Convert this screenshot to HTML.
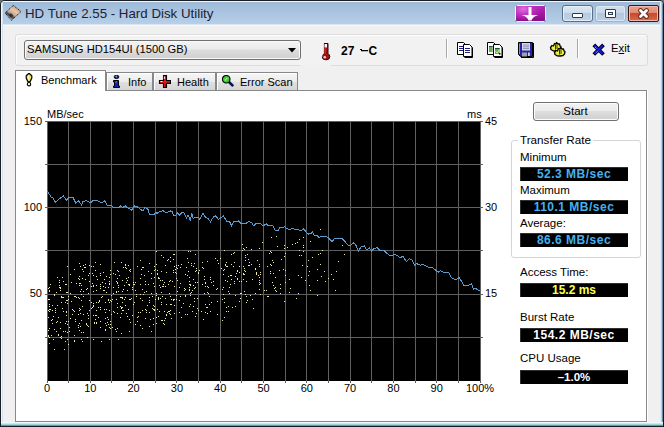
<!DOCTYPE html>
<html><head><meta charset="utf-8"><style>
*{margin:0;padding:0;box-sizing:border-box}
html,body{width:664px;height:427px;overflow:hidden;background:#6d7378}
body{position:relative;font-family:"Liberation Sans",sans-serif;font-size:11px;color:#000}
.a{position:absolute}
.t{position:absolute;white-space:nowrap;line-height:1}
#win{position:absolute;left:0;top:0;width:664px;height:427px;background:linear-gradient(90deg,#1a1d22 663px,#0c1a28 663px);border-radius:5px 5px 0 0;overflow:hidden}
#frame{position:absolute;left:1px;top:1px;width:662px;height:425px;border-radius:4px 4px 0 0;background:#f0f0f0;overflow:hidden}
#title{position:absolute;left:0;top:0;width:662px;height:25px;background:linear-gradient(#f4f8fc 0,#f4f8fc 1px,#9dbad8 1px,#a6c1dd 8px,#b7cfe8 23px,#d8e4f0 23px,#d8e4f0 24px,#f4f7fb 24px)}
.lf{position:absolute;left:0;top:1px;width:2px;height:425px;border-top-left-radius:3px;background:linear-gradient(90deg,#f6f9fc 0,#f6f9fc 1px,#d3e1ee 1px)}
.rf{position:absolute;right:0;top:1px;width:3px;height:425px;border-top-right-radius:3px;background:linear-gradient(90deg,#e2ecf6 0,#e2ecf6 1px,#b8d2e4 1px,#b8d2e4 2px,#6a8ca2 2px)}
.bf{position:absolute;left:0;top:421px;width:662px;height:5px;background:linear-gradient(#eefafc 0,#eefafc 1px,#c6ecf2 1px,#c6ecf2 2px,#9cd4e0 2px,#9cd4e0 3px,#5e9cac 3px,#5e9cac 4px,#05080a 4px)}
.ttl{left:25px;top:7px;font-size:13.3px;color:#1b2233}
.wb{position:absolute;top:5px;height:17px;border-radius:3px}
#band{position:absolute;left:15px;top:34px;width:633px;height:32px;border:1px solid #dcdcdc;border-radius:3px;background:#f2f2f2;box-shadow:inset 1px 1px 0 #fff}
#combo{position:absolute;left:24px;top:40px;width:277px;height:20px;border:1px solid #707070;border-radius:3px;background:linear-gradient(#f3f3f3 0,#ebebeb 45%,#dddddd 50%,#cfcfcf 100%);box-shadow:inset 0 0 0 1px #fafafa}
.tab{position:absolute;top:72px;height:18px;border:1px solid #878889;border-bottom:none;background:linear-gradient(#f6f6f6 0,#ececec 50%,#dfdfdf 51%,#d6d6d6 100%);box-shadow:inset 1px 1px 0 #fff}
#panel{position:absolute;left:15px;top:90px;width:632px;height:332px;border:1px solid #878889;background:#fff;box-shadow:1px 0 0 #fff}
.xl{position:absolute;top:383px;width:40px;text-align:center;font-size:11px;line-height:1}
.vbox{position:absolute;left:520px;width:108px;box-shadow:inset 1px 1px 0 #303030;height:14px;background:#000;text-align:center;font-weight:bold;font-size:12px;line-height:14px}
.lbl{position:absolute;left:520px;font-size:11.5px;line-height:1;white-space:nowrap}
</style></head><body>
<div id="win"><div id="frame">
 <div id="title"></div>
 <div class="lf"></div>
 <div class="rf"></div>
 <div class="bf"></div>
</div></div>
<!-- title icon -->
<svg class="a" style="left:0;top:0" width="26" height="26" viewBox="0 0 26 26">
 <defs><linearGradient id="ig" x1="0.8" y1="0.1" x2="0.2" y2="0.9"><stop offset="0" stop-color="#b89a80"/><stop offset="0.35" stop-color="#e8c8a8"/><stop offset="0.6" stop-color="#c0a890"/><stop offset="0.75" stop-color="#404040"/><stop offset="1" stop-color="#d8e0e8"/></linearGradient></defs>
 <path d="M13.3 5.4 L21 11.5 L11.5 20.3 L5 13Z" fill="url(#ig)" stroke="#1a2030" stroke-width="1" stroke-dasharray="1.2 0.8"/>
 <path d="M8.5 15 L11 13 L13.5 15.5 L11 17.5Z" fill="#202020" opacity="0.7"/>
</svg>
<div class="t ttl">HD Tune 2.55 - Hard Disk Utility</div>
<!-- purple button -->
<div class="a" style="left:515px;top:5px;width:31px;height:17px;border:1px solid #fbeefb;border-radius:2px;background:radial-gradient(ellipse 60% 80% at 25% 20%,#e070e0 0,#c030c0 50%,transparent 100%),linear-gradient(#b828b8,#8a0a8a)"></div>
<svg class="a" style="left:515px;top:5px" width="31" height="17" viewBox="0 0 31 17">
 <path d="M0.5 0.5h1.5v1h-1zM29 0.5h1.5v1.5h-1zM0.5 15h1.5v1.5h-1.5zM29 15h1.5v1.5h-1.5z" fill="#6a5a8a"/>
 <path d="M13.5 2 H16.5 V10 H23.5 Q18 11 16.5 15.5 H13.5 Q12 11 6.5 10 H13.5Z" fill="#fff"/>
</svg>
<!-- min -->
<div class="wb" style="left:562px;width:31px;border:1px solid #5b6e87;background:linear-gradient(#dce8f4 0,#cddcec 45%,#b6cbe2 50%,#bfd3e9 100%);box-shadow:inset 0 0 0 1px #e6eef8"></div>
<div class="a" style="left:572px;top:13px;width:11px;height:5px;border:1px solid #2e3a4c;border-radius:1px;background:#fff"></div>
<!-- max -->
<div class="wb" style="left:595px;width:31px;border:1px solid #9cb4cc;background:linear-gradient(#d2e0ee 0,#c6d7ea 45%,#b2c8e0 50%,#bcd0e6 100%);box-shadow:inset 0 0 0 1px #dde8f3"></div>
<div class="a" style="left:605px;top:9px;width:11px;height:9px;border:1px solid #2e3a4c;border-radius:1px;background:#fff"></div>
<div class="a" style="left:608px;top:12px;width:5px;height:3px;border:1px solid #2e3a4c;background:#e8e8e8"></div>
<!-- close -->
<div class="wb" style="left:628px;width:31px;border-radius:2px;border:1px solid #3b1616;background:linear-gradient(#eba08e 0,#e28a74 45%,#c8492c 50%,#d86a4c 100%);box-shadow:inset 0 0 0 1px #f2b8a8"></div>
<svg class="a" style="left:637px;top:8px" width="13" height="11" viewBox="0 0 13 11"><path d="M3.5 2.5 L9.5 8.5 M9.5 2.5 L3.5 8.5" stroke="#5a2a20" stroke-width="4.6" stroke-linecap="round"/><path d="M3.5 2.5 L9.5 8.5 M9.5 2.5 L3.5 8.5" stroke="#fff" stroke-width="2.8" stroke-linecap="round"/></svg>

<div id="band"></div>
<div id="combo"></div>
<div class="a" style="left:300px;top:65px;width:31px;height:1px;background:#f0f0f0"></div>
<div class="t" style="left:27px;top:44px;font-size:11.2px">SAMSUNG HD154UI (1500 GB)</div>
<svg class="a" style="left:288px;top:48px" width="8" height="5"><path d="M0 0H8L4 4.5Z" fill="#000"/></svg>
<!-- thermometer -->
<svg class="a" style="left:320px;top:42px" width="12" height="19" viewBox="0 0 12 19">
 <path d="M4 1.5 H8 V11.5 Q9.8 12.8 9.8 14.8 Q9.8 17.8 6 17.8 Q2.2 17.8 2.2 14.8 Q2.2 12.8 4 11.5Z" fill="#a81010" stroke="#2a0505" stroke-width="1"/>
 <path d="M3.5 1.2V11.3Q1.8 12.6 1.7 15" stroke="#fff" stroke-width="0.8" fill="none" opacity="0.9"/>
 <rect x="4.5" y="2" width="2.5" height="3.5" fill="#f8f0f0"/>
 <path d="M5 6V11.5" stroke="#e04848" stroke-width="0.9"/>
 <circle cx="4.8" cy="15.2" r="1.3" fill="#f8c8c8"/>
</svg>
<div class="t" style="left:341px;top:45px;font-size:12px;font-weight:bold">27</div>
<svg class="a" style="left:359px;top:47px" width="10" height="6"><path d="M1 2h2v1h-2zM2 3h7v1.3h-7z" fill="#000"/></svg>
<div class="t" style="left:368.5px;top:45px;font-size:12px;font-weight:bold">C</div>
<div class="a" style="left:446px;top:39px;width:1px;height:19px;background:#a8a8a8;box-shadow:1px 0 0 #fff"></div>
<div class="a" style="left:577px;top:39px;width:1px;height:19px;background:#a8a8a8;box-shadow:1px 0 0 #fff"></div>
<!-- copy icon -->
<svg class="a" style="left:456px;top:41px" width="18" height="17" viewBox="0 0 18 17">
 <path d="M1.5 1.5H7.5L9 3V13.5H1.5Z" fill="#fff" stroke="#000"/>
 <path d="M3 5.5H7M3 7.5H7M3 9.5H7" stroke="#20207a"/>
 <path d="M7.5 3.5H13.5L16 6V15.5H7.5Z" fill="#fff" stroke="#000"/>
 <path d="M8.5 16.5H16.5V6.5" stroke="#000" fill="none"/>
 <path d="M9 7.5H14M9 9.5H14M9 11.5H14" stroke="#20207a"/>
</svg>
<svg class="a" style="left:486px;top:41px" width="18" height="17" viewBox="0 0 18 17">
 <path d="M1.5 1.5H7.5L9 3V13.5H1.5Z" fill="#fff" stroke="#000"/>
 <rect x="3" y="5" width="3.6" height="6" fill="#6ab048"/><path d="M3 5.5H6.6" stroke="#205040"/>
 <path d="M7.5 3.5H13.5L16 6V15.5H7.5Z" fill="#fff" stroke="#000"/>
 <path d="M8.5 16.5H16.5V6.5" stroke="#000" fill="none"/>
 <rect x="9" y="7" width="4.7" height="6" fill="#6ab048"/><path d="M9 7.5H13.7" stroke="#205040"/>
 <path d="M9.5 10.5L11 12L13 9" stroke="#c8f0a0" fill="none"/><rect x="13" y="12" width="1.5" height="1.5" fill="#000"/>
</svg>
<!-- floppy -->
<svg class="a" style="left:517px;top:41px" width="18" height="18" viewBox="0 0 18 18">
 <path d="M1.5 1.5H15.5V15.5H3.5L1.5 13.5Z" fill="#2424a8" stroke="#000"/>
 <path d="M2.5 2.5V13" stroke="#8090e0" stroke-width="1"/>
 <rect x="5" y="2" width="8" height="7.5" fill="#d8d8f0"/>
 <path d="M6 4H12M6 5.8H12M6 7.6H12" stroke="#8888a8" stroke-width="0.9"/>
 <rect x="5" y="11.5" width="5" height="4" fill="#a0a0b0"/>
 <rect x="11" y="11.5" width="1.8" height="3.5" fill="#d0d0e0"/>
 <path d="M16.5 2V16.5H4" stroke="#000" fill="none"/>
</svg>
<!-- coins -->
<svg class="a" style="left:548px;top:41px" width="20" height="18" viewBox="0 0 20 18">
 <path d="M2.5 6.5 L4 4.5 L5.5 5 L6.5 2.5 L8 3 L8.5 1.5 L10 3 L11.5 2.8 L12 5 L13 5.5 L12.5 8 L11 9.5 L8 10 L5 9.8 L3 8.5Z" fill="#f0f040" stroke="#000" stroke-width="1.3" stroke-linejoin="round"/>
 <path d="M7.5 3.5V8.5M9 3.5V8" stroke="#202000" stroke-width="0.9"/>
 <path d="M6.5 11.5 L8 9.5 L9.5 10 L10.5 7.5 L12 8 L12.5 6.5 L14 8 L15.5 7.8 L16 10 L17 10.5 L16.5 13 L15 14.5 L12 15 L9 14.8 L7 13.5Z" fill="#f0f040" stroke="#000" stroke-width="1.3" stroke-linejoin="round"/>
 <path d="M11.5 8.5V13.5M13 8.5V13" stroke="#202000" stroke-width="0.9"/>
</svg>
<!-- X exit -->
<svg class="a" style="left:592px;top:43px" width="14" height="14" viewBox="0 0 14 14">
 <path d="M1.8 1.8L11.5 11.5M11.5 1.8L1.8 11.5" stroke="#000028" stroke-width="3.8" stroke-linecap="butt"/>
 <path d="M2.6 2.6L10.7 10.7M10.7 2.6L2.6 10.7" stroke="#1818d0" stroke-width="2" stroke-linecap="butt"/>
 <path d="M2.8 3.8L4.5 5.5M4 9.8L5.5 8.3" stroke="#90b0f8" stroke-width="0.9"/>
</svg>
<div class="t" style="left:611px;top:43px;font-size:11.3px">E<u>x</u>it</div>

<!-- tabs -->
<div id="panel"></div>
<div class="tab" style="left:106px;width:47px"></div>
<div class="tab" style="left:153px;width:63px"></div>
<div class="tab" style="left:216px;width:82px"></div>
<div class="a" style="left:15px;top:70px;width:91px;height:21px;border:1px solid #878889;border-bottom:none;background:#fff"></div>
<!-- bulb -->
<svg class="a" style="left:25px;top:73px" width="8" height="14" viewBox="0 0 8 14">
 <path d="M3.5 0.7 H4.5 L6.8 2.8 V5 L5 8.8 H3 L1.2 5 V2.8Z" fill="#f0e850" stroke="#000" stroke-width="1.2"/>
 <path d="M3.5 2.5 L3.8 7" stroke="#fffbd0" stroke-width="1"/>
 <circle cx="4" cy="11.2" r="1.7" fill="#fff" stroke="#000" stroke-width="1.1"/>
</svg>
<div class="t" style="left:41px;top:75px;font-size:11px">Benchmark</div>
<!-- info -->
<svg class="a" style="left:112px;top:75px" width="9" height="13" viewBox="0 0 9 13">
 <ellipse cx="4.5" cy="1.9" rx="2.4" ry="1.7" fill="#1a2a80" stroke="#000" stroke-width="0.9"/>
 <circle cx="4.2" cy="1.6" r="0.8" fill="#80a8f0"/>
 <path d="M1.5 5.5 H6.5 V11 H7.5 V12.5 H1.5 V11 H2.5 V7 H1.5Z" fill="#1020b0" stroke="#000" stroke-width="1"/>
 <path d="M3.5 7.5 Q3.8 6.6 4.8 6.8" stroke="#a0b8f0" stroke-width="0.9" fill="none"/>
</svg>
<div class="t" style="left:128px;top:77px;font-size:11px">Info</div>
<!-- health cross -->
<svg class="a" style="left:158px;top:74px" width="13" height="14" viewBox="0 0 13 14">
 <path d="M5.5 1.5H8.5V6.5H12.5V9.5H8.5V13.5H5.5V9.5H1.5V6.5H5.5Z" fill="#d81818" stroke="#000" stroke-width="1.1"/>
 <path d="M6.3 2.5V5M2.5 7.5H4.5" stroke="#fff" stroke-width="1"/>
 <path d="M7.5 10V13M9 8.5H12" stroke="#801010" stroke-width="1"/>
</svg>
<div class="t" style="left:177px;top:77px;font-size:11px">Health</div>
<!-- magnifier -->
<svg class="a" style="left:222px;top:75px" width="13" height="13" viewBox="0 0 13 13">
 <path d="M6.5 6.5L11.2 11.2" stroke="#0a1250" stroke-width="2.6" stroke-linecap="butt"/>
 <circle cx="4.2" cy="4.2" r="3.8" fill="#40c838" stroke="#000" stroke-width="1.1"/>
 <path d="M2.8 5.5 L5.5 2.8" stroke="#a0f090" stroke-width="1.2"/>
</svg>
<div class="t" style="left:240px;top:77px;font-size:11px">Error Scan</div>

<!-- chart -->
<svg class="a" style="left:0;top:0" width="664" height="427">
 <rect x="48" y="122" width="432" height="259" fill="#000"/>
 <path d="M68.5 121V381M90.5 121V381M111.5 121V381M133.5 121V381M155.5 121V381M176.5 121V381M198.5 121V381M220.5 121V381M241.5 121V381M263.5 121V381M285.5 121V381M306.5 121V381M328.5 121V381M350.5 121V381M371.5 121V381M393.5 121V381M415.5 121V381M436.5 121V381M458.5 121V381M47 164.5H480M47 207.5H480M47 250.5H480M47 294.5H480M47 337.5H480" stroke="#606060" stroke-width="1"/>
 <path d="M45 121.5H483M47.5 121V383M480.5 121V381M47.5 381V383M68.5 381V383M90.5 381V383M111.5 381V383M133.5 381V383M155.5 381V383M176.5 381V383M198.5 381V383M220.5 381V383M241.5 381V383M263.5 381V383M285.5 381V383M306.5 381V383M328.5 381V383M350.5 381V383M371.5 381V383M393.5 381V383M415.5 381V383M436.5 381V383M458.5 381V383M480.5 381V383M45 121.5H47M45 164.5H47M45 207.5H47M45 250.5H47M45 294.5H47M45 337.5H47M480 121.5H483M480 164.5H483M480 207.5H483M480 250.5H483M480 294.5H483M480 337.5H483" stroke="#606060" stroke-width="1" fill="none"/>
 <path d="M149 300h1v1h-1zM215 258h1v1h-1zM59 287h1v1h-1zM180 267h1v1h-1zM228 306h1v1h-1zM93 285h1v1h-1zM104 309h1v1h-1zM218 263h1v1h-1zM146 291h1v1h-1zM124 299h1v1h-1zM275 290h1v1h-1zM178 265h1v1h-1zM60 328h1v1h-1zM228 311h1v1h-1zM195 254h1v1h-1zM168 259h1v1h-1zM100 264h1v1h-1zM88 293h1v1h-1zM73 310h1v1h-1zM134 284h1v1h-1zM102 282h1v1h-1zM231 254h1v1h-1zM163 323h1v1h-1zM208 293h1v1h-1zM170 261h1v1h-1zM67 292h1v1h-1zM154 266h1v1h-1zM79 263h1v1h-1zM239 266h1v1h-1zM161 320h1v1h-1zM193 266h1v1h-1zM154 309h1v1h-1zM55 312h1v1h-1zM217 288h1v1h-1zM129 270h1v1h-1zM150 319h1v1h-1zM118 291h1v1h-1zM56 292h1v1h-1zM116 281h1v1h-1zM74 340h1v1h-1zM103 286h1v1h-1zM173 299h1v1h-1zM87 337h1v1h-1zM93 339h1v1h-1zM157 274h1v1h-1zM183 303h1v1h-1zM126 278h1v1h-1zM128 265h1v1h-1zM158 298h1v1h-1zM179 287h1v1h-1zM211 282h1v1h-1zM49 290h1v1h-1zM149 297h1v1h-1zM81 289h1v1h-1zM239 281h1v1h-1zM189 284h1v1h-1zM310 241h1v1h-1zM70 274h1v1h-1zM96 310h1v1h-1zM116 291h1v1h-1zM98 302h1v1h-1zM109 310h1v1h-1zM220 258h1v1h-1zM242 244h1v1h-1zM80 266h1v1h-1zM132 289h1v1h-1zM303 237h1v1h-1zM226 266h1v1h-1zM70 318h1v1h-1zM74 269h1v1h-1zM189 290h1v1h-1zM131 298h1v1h-1zM82 278h1v1h-1zM145 309h1v1h-1zM204 279h1v1h-1zM126 313h1v1h-1zM107 322h1v1h-1zM170 304h1v1h-1zM154 306h1v1h-1zM174 266h1v1h-1zM70 293h1v1h-1zM74 335h1v1h-1zM135 282h1v1h-1zM97 279h1v1h-1zM124 285h1v1h-1zM48 310h1v1h-1zM110 270h1v1h-1zM76 283h1v1h-1zM142 300h1v1h-1zM169 313h1v1h-1zM61 338h1v1h-1zM91 302h1v1h-1zM119 275h1v1h-1zM80 309h1v1h-1zM243 279h1v1h-1zM204 293h1v1h-1zM277 246h1v1h-1zM275 287h1v1h-1zM202 284h1v1h-1zM248 259h1v1h-1zM279 270h1v1h-1zM66 321h1v1h-1zM258 275h1v1h-1zM193 306h1v1h-1zM53 339h1v1h-1zM188 262h1v1h-1zM113 273h1v1h-1zM120 297h1v1h-1zM49 309h1v1h-1zM91 286h1v1h-1zM48 330h1v1h-1zM164 324h1v1h-1zM160 280h1v1h-1zM79 285h1v1h-1zM125 297h1v1h-1zM164 320h1v1h-1zM272 282h1v1h-1zM137 317h1v1h-1zM195 271h1v1h-1zM252 279h1v1h-1zM100 275h1v1h-1zM203 319h1v1h-1zM188 271h1v1h-1zM154 277h1v1h-1zM177 280h1v1h-1zM67 332h1v1h-1zM205 304h1v1h-1zM132 289h1v1h-1zM320 229h1v1h-1zM231 275h1v1h-1zM82 306h1v1h-1zM190 251h1v1h-1zM120 306h1v1h-1zM87 313h1v1h-1zM82 306h1v1h-1zM169 293h1v1h-1zM142 328h1v1h-1zM121 333h1v1h-1zM143 294h1v1h-1zM179 300h1v1h-1zM118 287h1v1h-1zM260 294h1v1h-1zM205 312h1v1h-1zM303 245h1v1h-1zM140 294h1v1h-1zM117 313h1v1h-1zM93 275h1v1h-1zM92 273h1v1h-1zM105 312h1v1h-1zM255 268h1v1h-1zM100 286h1v1h-1zM159 311h1v1h-1zM63 297h1v1h-1zM108 319h1v1h-1zM176 299h1v1h-1zM58 334h1v1h-1zM153 324h1v1h-1zM129 285h1v1h-1zM49 343h1v1h-1zM342 245h1v1h-1zM168 284h1v1h-1zM237 271h1v1h-1zM292 244h1v1h-1zM125 264h1v1h-1zM149 326h1v1h-1zM130 269h1v1h-1zM121 307h1v1h-1zM255 293h1v1h-1zM224 298h1v1h-1zM125 267h1v1h-1zM228 276h1v1h-1zM206 307h1v1h-1zM196 313h1v1h-1zM60 288h1v1h-1zM129 319h1v1h-1zM233 266h1v1h-1zM92 283h1v1h-1zM251 249h1v1h-1zM259 264h1v1h-1zM67 300h1v1h-1zM247 254h1v1h-1zM175 272h1v1h-1zM145 284h1v1h-1zM161 302h1v1h-1zM49 306h1v1h-1zM174 286h1v1h-1zM52 323h1v1h-1zM75 296h1v1h-1zM93 303h1v1h-1zM81 332h1v1h-1zM109 339h1v1h-1zM198 310h1v1h-1zM305 280h1v1h-1zM174 305h1v1h-1zM116 299h1v1h-1zM86 323h1v1h-1zM60 322h1v1h-1zM309 271h1v1h-1zM243 274h1v1h-1zM180 283h1v1h-1zM55 310h1v1h-1zM190 284h1v1h-1zM88 275h1v1h-1zM207 292h1v1h-1zM207 286h1v1h-1zM108 299h1v1h-1zM68 321h1v1h-1zM302 265h1v1h-1zM112 299h1v1h-1zM59 280h1v1h-1zM100 273h1v1h-1zM246 302h1v1h-1zM80 313h1v1h-1zM296 298h1v1h-1zM160 287h1v1h-1zM280 284h1v1h-1zM230 275h1v1h-1zM58 317h1v1h-1zM89 310h1v1h-1zM48 288h1v1h-1zM117 303h1v1h-1zM242 250h1v1h-1zM123 267h1v1h-1zM173 254h1v1h-1zM223 294h1v1h-1zM125 265h1v1h-1zM174 254h1v1h-1zM51 335h1v1h-1zM110 300h1v1h-1zM301 255h1v1h-1zM63 331h1v1h-1zM49 328h1v1h-1zM118 285h1v1h-1zM152 308h1v1h-1zM270 273h1v1h-1zM130 322h1v1h-1zM322 250h1v1h-1zM280 288h1v1h-1zM122 307h1v1h-1zM194 301h1v1h-1zM184 290h1v1h-1zM114 262h1v1h-1zM93 266h1v1h-1zM155 269h1v1h-1zM68 296h1v1h-1zM68 344h1v1h-1zM81 285h1v1h-1zM245 260h1v1h-1zM284 256h1v1h-1zM54 294h1v1h-1zM162 320h1v1h-1zM57 305h1v1h-1zM156 293h1v1h-1zM317 280h1v1h-1zM48 335h1v1h-1zM49 311h1v1h-1zM105 287h1v1h-1zM129 284h1v1h-1zM82 269h1v1h-1zM243 273h1v1h-1zM325 281h1v1h-1zM112 327h1v1h-1zM166 272h1v1h-1zM156 264h1v1h-1zM100 321h1v1h-1zM87 325h1v1h-1zM107 317h1v1h-1zM96 285h1v1h-1zM210 277h1v1h-1zM79 279h1v1h-1zM109 277h1v1h-1zM169 281h1v1h-1zM245 255h1v1h-1zM174 313h1v1h-1zM227 281h1v1h-1zM248 265h1v1h-1zM78 327h1v1h-1zM244 274h1v1h-1zM241 293h1v1h-1zM105 318h1v1h-1zM59 282h1v1h-1zM79 308h1v1h-1zM207 307h1v1h-1zM176 267h1v1h-1zM170 257h1v1h-1zM158 277h1v1h-1zM52 305h1v1h-1zM157 270h1v1h-1zM116 292h1v1h-1zM88 326h1v1h-1zM194 263h1v1h-1zM158 316h1v1h-1zM194 288h1v1h-1zM165 286h1v1h-1zM48 299h1v1h-1zM142 289h1v1h-1zM253 308h1v1h-1zM65 341h1v1h-1zM91 308h1v1h-1zM51 320h1v1h-1zM79 283h1v1h-1zM156 323h1v1h-1zM100 309h1v1h-1zM109 302h1v1h-1zM184 288h1v1h-1zM121 297h1v1h-1zM193 285h1v1h-1zM50 309h1v1h-1zM164 311h1v1h-1zM246 247h1v1h-1zM151 293h1v1h-1zM328 278h1v1h-1zM153 283h1v1h-1zM113 293h1v1h-1zM205 286h1v1h-1zM151 278h1v1h-1zM60 337h1v1h-1zM63 281h1v1h-1zM240 293h1v1h-1zM260 283h1v1h-1zM285 253h1v1h-1zM252 299h1v1h-1zM223 274h1v1h-1zM147 305h1v1h-1zM65 284h1v1h-1zM52 319h1v1h-1zM176 295h1v1h-1zM95 262h1v1h-1zM85 267h1v1h-1zM88 315h1v1h-1zM276 236h1v1h-1zM275 277h1v1h-1zM191 265h1v1h-1zM271 237h1v1h-1zM303 251h1v1h-1zM99 300h1v1h-1zM162 286h1v1h-1zM93 291h1v1h-1zM244 270h1v1h-1zM224 250h1v1h-1zM151 331h1v1h-1zM235 276h1v1h-1zM165 298h1v1h-1zM299 239h1v1h-1zM179 312h1v1h-1zM61 336h1v1h-1zM226 311h1v1h-1zM156 295h1v1h-1zM110 324h1v1h-1zM237 279h1v1h-1zM127 316h1v1h-1zM75 321h1v1h-1zM196 270h1v1h-1zM104 290h1v1h-1zM173 272h1v1h-1zM81 320h1v1h-1zM234 283h1v1h-1zM58 335h1v1h-1zM224 302h1v1h-1zM127 280h1v1h-1zM74 311h1v1h-1zM190 304h1v1h-1zM234 252h1v1h-1zM128 309h1v1h-1zM256 272h1v1h-1zM117 283h1v1h-1zM309 285h1v1h-1zM65 331h1v1h-1zM259 280h1v1h-1zM80 291h1v1h-1zM198 273h1v1h-1zM259 284h1v1h-1zM59 285h1v1h-1zM91 266h1v1h-1zM189 306h1v1h-1zM243 266h1v1h-1zM93 286h1v1h-1zM96 322h1v1h-1zM100 284h1v1h-1zM83 265h1v1h-1zM256 273h1v1h-1zM128 284h1v1h-1zM78 325h1v1h-1zM274 288h1v1h-1zM299 250h1v1h-1zM105 323h1v1h-1zM226 262h1v1h-1zM270 251h1v1h-1zM237 270h1v1h-1zM239 301h1v1h-1zM111 314h1v1h-1zM273 285h1v1h-1zM201 311h1v1h-1zM106 292h1v1h-1zM163 257h1v1h-1zM187 258h1v1h-1zM148 284h1v1h-1zM67 339h1v1h-1zM208 287h1v1h-1zM104 279h1v1h-1zM57 321h1v1h-1zM53 316h1v1h-1zM267 296h1v1h-1zM62 308h1v1h-1zM135 290h1v1h-1zM93 315h1v1h-1zM169 311h1v1h-1zM171 304h1v1h-1zM122 291h1v1h-1zM64 349h1v1h-1zM125 305h1v1h-1zM213 281h1v1h-1zM54 349h1v1h-1zM324 271h1v1h-1zM259 277h1v1h-1zM241 281h1v1h-1zM143 267h1v1h-1zM131 298h1v1h-1zM86 289h1v1h-1zM137 266h1v1h-1zM225 264h1v1h-1zM191 292h1v1h-1zM144 275h1v1h-1zM167 260h1v1h-1zM221 268h1v1h-1zM140 278h1v1h-1zM67 303h1v1h-1zM82 341h1v1h-1zM96 290h1v1h-1zM333 279h1v1h-1zM226 307h1v1h-1zM237 278h1v1h-1zM273 262h1v1h-1zM167 312h1v1h-1zM203 268h1v1h-1zM93 306h1v1h-1zM181 264h1v1h-1zM224 317h1v1h-1zM209 296h1v1h-1zM159 278h1v1h-1zM78 297h1v1h-1zM185 314h1v1h-1zM101 341h1v1h-1zM207 313h1v1h-1zM96 302h1v1h-1zM106 309h1v1h-1zM158 297h1v1h-1zM176 273h1v1h-1zM49 337h1v1h-1zM256 274h1v1h-1zM130 299h1v1h-1zM227 266h1v1h-1zM284 248h1v1h-1zM67 324h1v1h-1zM271 252h1v1h-1zM79 310h1v1h-1zM188 251h1v1h-1zM185 274h1v1h-1zM146 312h1v1h-1zM123 310h1v1h-1zM144 292h1v1h-1zM123 289h1v1h-1zM223 287h1v1h-1zM173 259h1v1h-1zM157 273h1v1h-1zM121 308h1v1h-1zM96 276h1v1h-1zM308 260h1v1h-1zM299 255h1v1h-1zM165 265h1v1h-1zM205 283h1v1h-1zM268 296h1v1h-1zM162 296h1v1h-1zM320 264h1v1h-1zM132 287h1v1h-1zM225 280h1v1h-1zM103 286h1v1h-1zM81 294h1v1h-1zM140 284h1v1h-1zM87 288h1v1h-1zM89 265h1v1h-1zM255 269h1v1h-1zM266 290h1v1h-1zM244 249h1v1h-1zM60 290h1v1h-1zM142 267h1v1h-1zM247 300h1v1h-1zM271 265h1v1h-1zM156 317h1v1h-1zM137 321h1v1h-1zM62 277h1v1h-1zM113 311h1v1h-1zM264 290h1v1h-1zM135 324h1v1h-1zM243 248h1v1h-1zM181 307h1v1h-1zM285 282h1v1h-1zM129 331h1v1h-1zM217 260h1v1h-1zM176 278h1v1h-1zM122 298h1v1h-1zM141 269h1v1h-1zM152 296h1v1h-1zM100 307h1v1h-1zM83 296h1v1h-1zM66 284h1v1h-1zM187 275h1v1h-1zM161 271h1v1h-1zM74 341h1v1h-1zM81 300h1v1h-1zM217 314h1v1h-1zM251 264h1v1h-1zM56 331h1v1h-1zM105 330h1v1h-1zM100 327h1v1h-1zM149 312h1v1h-1zM162 280h1v1h-1zM122 302h1v1h-1zM202 267h1v1h-1zM229 293h1v1h-1zM186 267h1v1h-1zM185 295h1v1h-1zM136 296h1v1h-1zM153 305h1v1h-1zM140 298h1v1h-1zM108 287h1v1h-1zM301 277h1v1h-1zM140 325h1v1h-1zM249 265h1v1h-1zM56 322h1v1h-1zM74 296h1v1h-1zM177 291h1v1h-1zM83 332h1v1h-1zM83 291h1v1h-1zM213 285h1v1h-1zM118 271h1v1h-1zM231 279h1v1h-1zM185 289h1v1h-1zM284 301h1v1h-1zM79 298h1v1h-1zM289 279h1v1h-1zM121 262h1v1h-1zM114 312h1v1h-1zM100 288h1v1h-1zM86 324h1v1h-1zM273 273h1v1h-1zM83 314h1v1h-1zM108 324h1v1h-1zM83 271h1v1h-1zM105 283h1v1h-1zM166 314h1v1h-1zM344 254h1v1h-1zM297 242h1v1h-1zM260 272h1v1h-1zM71 282h1v1h-1zM231 264h1v1h-1zM193 279h1v1h-1zM49 304h1v1h-1zM191 263h1v1h-1zM257 260h1v1h-1zM129 299h1v1h-1zM245 271h1v1h-1zM142 310h1v1h-1zM246 281h1v1h-1zM66 292h1v1h-1zM198 272h1v1h-1zM156 251h1v1h-1zM189 289h1v1h-1zM100 288h1v1h-1zM72 314h1v1h-1zM159 285h1v1h-1zM69 331h1v1h-1zM128 277h1v1h-1zM267 266h1v1h-1zM250 295h1v1h-1zM235 306h1v1h-1zM154 270h1v1h-1zM149 302h1v1h-1zM259 248h1v1h-1zM62 297h1v1h-1zM234 281h1v1h-1zM239 272h1v1h-1zM96 315h1v1h-1zM216 289h1v1h-1zM235 295h1v1h-1zM290 288h1v1h-1zM189 287h1v1h-1zM89 300h1v1h-1zM289 292h1v1h-1zM284 245h1v1h-1zM66 311h1v1h-1zM94 323h1v1h-1zM98 317h1v1h-1zM246 296h1v1h-1zM149 263h1v1h-1zM68 299h1v1h-1zM66 300h1v1h-1zM117 282h1v1h-1zM120 317h1v1h-1zM141 274h1v1h-1zM96 323h1v1h-1zM136 294h1v1h-1zM98 307h1v1h-1zM113 287h1v1h-1zM317 295h1v1h-1zM140 260h1v1h-1zM50 284h1v1h-1zM78 314h1v1h-1zM153 309h1v1h-1zM121 307h1v1h-1zM205 282h1v1h-1zM54 295h1v1h-1zM85 279h1v1h-1zM103 272h1v1h-1zM204 276h1v1h-1zM115 329h1v1h-1zM133 284h1v1h-1zM61 302h1v1h-1zM161 304h1v1h-1zM217 301h1v1h-1zM172 281h1v1h-1zM168 284h1v1h-1zM127 290h1v1h-1zM109 327h1v1h-1zM331 274h1v1h-1zM249 262h1v1h-1zM48 336h1v1h-1zM121 313h1v1h-1zM270 271h1v1h-1zM259 282h1v1h-1zM117 278h1v1h-1zM195 287h1v1h-1zM117 328h1v1h-1zM211 302h1v1h-1zM101 297h1v1h-1zM318 254h1v1h-1zM303 247h1v1h-1zM80 326h1v1h-1zM189 277h1v1h-1zM197 298h1v1h-1zM260 274h1v1h-1zM163 284h1v1h-1zM110 274h1v1h-1zM272 260h1v1h-1zM308 275h1v1h-1zM110 321h1v1h-1zM163 286h1v1h-1zM270 264h1v1h-1zM168 311h1v1h-1zM164 282h1v1h-1zM283 269h1v1h-1zM55 308h1v1h-1zM195 282h1v1h-1zM173 300h1v1h-1zM84 267h1v1h-1zM79 323h1v1h-1zM65 323h1v1h-1zM65 302h1v1h-1zM320 253h1v1h-1zM49 299h1v1h-1zM145 318h1v1h-1zM207 261h1v1h-1zM111 301h1v1h-1zM192 290h1v1h-1zM298 293h1v1h-1zM63 311h1v1h-1zM224 269h1v1h-1zM138 316h1v1h-1zM189 281h1v1h-1zM66 315h1v1h-1zM317 269h1v1h-1zM140 312h1v1h-1zM79 330h1v1h-1zM177 268h1v1h-1zM262 242h1v1h-1zM61 297h1v1h-1zM229 287h1v1h-1zM310 290h1v1h-1zM170 280h1v1h-1zM117 270h1v1h-1zM259 289h1v1h-1zM138 312h1v1h-1zM338 261h1v1h-1zM234 262h1v1h-1zM132 315h1v1h-1zM336 271h1v1h-1zM155 299h1v1h-1zM151 273h1v1h-1zM103 290h1v1h-1zM222 289h1v1h-1zM233 253h1v1h-1zM78 278h1v1h-1zM158 299h1v1h-1zM100 286h1v1h-1zM94 322h1v1h-1zM202 262h1v1h-1zM99 301h1v1h-1zM109 283h1v1h-1zM122 297h1v1h-1zM52 310h1v1h-1zM225 265h1v1h-1zM95 270h1v1h-1zM209 304h1v1h-1zM228 291h1v1h-1zM269 253h1v1h-1zM240 298h1v1h-1zM335 290h1v1h-1zM175 269h1v1h-1zM259 266h1v1h-1zM109 284h1v1h-1zM197 308h1v1h-1zM110 328h1v1h-1zM76 297h1v1h-1zM280 293h1v1h-1zM232 307h1v1h-1zM126 282h1v1h-1zM190 285h1v1h-1zM170 310h1v1h-1zM174 299h1v1h-1zM153 318h1v1h-1zM49 287h1v1h-1zM236 273h1v1h-1zM158 298h1v1h-1zM75 319h1v1h-1zM85 264h1v1h-1zM105 329h1v1h-1zM117 307h1v1h-1zM171 318h1v1h-1zM307 266h1v1h-1zM102 296h1v1h-1zM126 268h1v1h-1zM165 318h1v1h-1zM71 301h1v1h-1zM160 298h1v1h-1zM210 311h1v1h-1zM161 255h1v1h-1zM187 314h1v1h-1zM281 259h1v1h-1zM93 305h1v1h-1zM170 296h1v1h-1zM285 270h1v1h-1zM166 304h1v1h-1zM134 302h1v1h-1zM295 243h1v1h-1zM321 276h1v1h-1zM145 281h1v1h-1zM106 325h1v1h-1zM148 271h1v1h-1zM170 314h1v1h-1zM111 295h1v1h-1zM146 310h1v1h-1zM222 299h1v1h-1zM161 292h1v1h-1zM244 291h1v1h-1zM158 278h1v1h-1zM69 327h1v1h-1zM176 265h1v1h-1zM245 294h1v1h-1zM154 310h1v1h-1zM105 302h1v1h-1zM89 273h1v1h-1zM173 270h1v1h-1zM95 319h1v1h-1zM88 318h1v1h-1zM133 304h1v1h-1zM133 282h1v1h-1zM298 275h1v1h-1zM49 291h1v1h-1zM66 312h1v1h-1zM60 287h1v1h-1zM244 268h1v1h-1zM115 274h1v1h-1zM57 277h1v1h-1zM180 296h1v1h-1zM230 284h1v1h-1zM118 339h1v1h-1zM197 282h1v1h-1zM154 286h1v1h-1zM108 300h1v1h-1zM109 281h1v1h-1zM222 320h1v1h-1zM67 266h1v1h-1zM130 271h1v1h-1zM61 296h1v1h-1zM79 276h1v1h-1zM195 316h1v1h-1zM196 268h1v1h-1zM223 270h1v1h-1zM54 329h1v1h-1zM276 291h1v1h-1zM89 281h1v1h-1zM166 315h1v1h-1zM192 311h1v1h-1zM70 318h1v1h-1zM199 270h1v1h-1zM80 283h1v1h-1zM190 295h1v1h-1zM185 296h1v1h-1zM194 298h1v1h-1zM122 310h1v1h-1zM92 307h1v1h-1zM122 280h1v1h-1zM245 257h1v1h-1zM59 287h1v1h-1zM116 331h1v1h-1zM95 315h1v1h-1zM106 276h1v1h-1zM81 339h1v1h-1zM48 317h1v1h-1zM204 293h1v1h-1zM72 309h1v1h-1zM171 299h1v1h-1zM190 293h1v1h-1zM181 317h1v1h-1zM157 309h1v1h-1zM312 257h1v1h-1zM285 275h1v1h-1zM287 247h1v1h-1zM210 279h1v1h-1z" fill="#efeca8"/>
 <path d="M47.5 191.3 L51.2 197.1 L52.9 197.9 L55.4 202.1 L59.5 198.8 L63.2 195.9 L66.5 200.0 L68.6 197.9 L73.2 197.9 L75.7 202.9 L78.6 200.8 L81.5 205.0 L83.1 201.2 L86.4 200.8 L90.6 202.9 L92.6 200.8 L98.0 200.9 L101.3 203.0 L104.6 200.9 L107.1 205.0 L111.3 205.0 L113.7 207.9 L118.7 207.9 L120.8 205.9 L122.9 207.5 L125.3 205.9 L127.8 207.9 L131.6 210.0 L134.5 205.9 L136.9 206.3 L138.6 207.9 L142.7 210.8 L144.8 207.9 L147.7 208.3 L149.4 214.5 L153.7 215.0 L155.4 212.5 L157.0 213.3 L160.0 211.1 L163.3 210.9 L166.6 212.9 L169.9 210.9 L172.0 211.3 L173.6 215.0 L176.1 215.0 L177.3 212.9 L179.4 215.0 L181.5 212.9 L184.0 212.9 L186.5 218.3 L188.1 215.0 L190.2 220.4 L191.8 213.8 L193.1 218.3 L194.7 217.9 L198.0 217.1 L199.7 219.1 L203.2 213.2 L205.4 217.2 L208.1 218.6 L210.4 221.8 L213.6 216.8 L215.8 215.9 L218.5 219.5 L223.5 215.9 L227.1 221.8 L229.4 221.3 L231.6 225.8 L233.9 221.3 L238.4 221.0 L241.1 223.5 L245.2 224.0 L248.3 221.8 L251.5 222.2 L253.7 225.8 L256.0 223.5 L260.5 223.8 L263.0 225.9 L266.3 223.8 L268.4 225.9 L272.9 225.9 L275.4 230.8 L277.9 230.8 L279.5 227.9 L282.9 227.5 L284.5 226.7 L286.6 228.8 L290.3 229.6 L291.6 228.8 L297.0 229.2 L301.1 230.8 L303.6 228.8 L306.9 232.9 L308.5 234.1 L311.0 233.7 L312.1 231.7 L314.1 235.0 L316.6 235.0 L319.1 237.9 L320.8 236.3 L326.6 236.7 L328.6 237.9 L332.0 241.7 L334.4 238.8 L342.3 238.8 L348.1 245.0 L350.6 245.4 L353.5 242.9 L355.6 244.5 L358.5 251.2 L361.4 246.2 L364.5 246.0 L366.6 249.7 L369.5 248.0 L371.5 250.9 L373.6 248.9 L376.9 247.6 L379.8 250.1 L384.4 250.9 L389.3 255.5 L391.0 255.9 L393.5 254.7 L396.8 255.1 L400.1 258.0 L403.0 255.9 L406.3 261.7 L409.2 258.8 L411.7 259.6 L414.6 265.0 L416.6 263.6 L420.1 265.2 L422.7 264.6 L426.8 266.2 L429.9 267.9 L433.0 267.9 L438.1 272.3 L440.6 270.8 L444.7 272.8 L448.8 272.8 L451.4 277.5 L456.0 280.0 L459.1 277.5 L464.2 285.7 L469.3 284.9 L471.4 283.6 L473.4 289.2 L476.0 288.7 L479.6 290.8" stroke="#5a9cd0" stroke-width="1" fill="none" shape-rendering="crispEdges"/>
</svg>
<div class="t" style="left:47px;top:109px;font-size:11px">MB/sec</div>
<div class="t" style="left:467px;top:109px;font-size:11px">ms</div>
<div class="t" style="left:22px;top:116px;width:20px;text-align:right;font-size:11px">150</div>
<div class="t" style="left:22px;top:202px;width:20px;text-align:right;font-size:11px">100</div>
<div class="t" style="left:22px;top:288px;width:20px;text-align:right;font-size:11px">50</div>
<div class="t" style="left:485px;top:116px;font-size:11px">45</div>
<div class="t" style="left:485px;top:202px;font-size:11px">30</div>
<div class="t" style="left:485px;top:288px;font-size:11px">15</div>
<div class="xl" style="left:27.0px">0</div><div class="xl" style="left:70.3px">10</div><div class="xl" style="left:113.6px">20</div><div class="xl" style="left:156.9px">30</div><div class="xl" style="left:200.2px">40</div><div class="xl" style="left:243.5px">50</div><div class="xl" style="left:286.8px">60</div><div class="xl" style="left:330.1px">70</div><div class="xl" style="left:373.4px">80</div><div class="xl" style="left:416.7px">90</div><div class="xl" style="left:460.0px">100%</div>

<!-- right panel -->
<div class="a" style="left:533px;top:102px;width:86px;height:19px;border:1px solid #707070;border-radius:3px;background:linear-gradient(#f2f2f2 0,#ebebeb 45%,#dddddd 50%,#cfcfcf 100%);box-shadow:inset 0 0 0 1px #fcfcfc"></div>
<div class="t" style="left:532.5px;top:106px;width:86px;text-align:center;font-size:11.5px">Start</div>
<div class="a" style="left:511px;top:140px;width:130px;height:118px;border:1px solid #d3d6d8;border-radius:3px"></div>
<div class="t" style="left:518px;top:134px;padding:0 2px;background:#fff;font-size:11.7px">Transfer Rate</div>
<div class="lbl" style="top:152px">Minimum</div>
<div class="vbox" style="top:167px;color:#46b0ee;letter-spacing:0.5px">52.3 MB/sec</div>
<div class="lbl" style="top:185px">Maximum</div>
<div class="vbox" style="top:200px;color:#46b0ee;letter-spacing:0.5px">110.1 MB/sec</div>
<div class="lbl" style="top:218px">Average:</div>
<div class="vbox" style="top:233px;color:#46b0ee;letter-spacing:0.5px">86.6 MB/sec</div>
<div class="lbl" style="top:267px">Access Time:</div>
<div class="vbox" style="top:283px;color:#ffff50">15.2 ms</div>
<div class="lbl" style="top:312px">Burst Rate</div>
<div class="vbox" style="top:328px;color:#fff;letter-spacing:0.5px">154.2 MB/sec</div>
<div class="lbl" style="top:353px">CPU Usage</div>
<div class="vbox" style="top:370px;color:#fff;font-size:11.5px">–1.0%</div>
</body></html>
